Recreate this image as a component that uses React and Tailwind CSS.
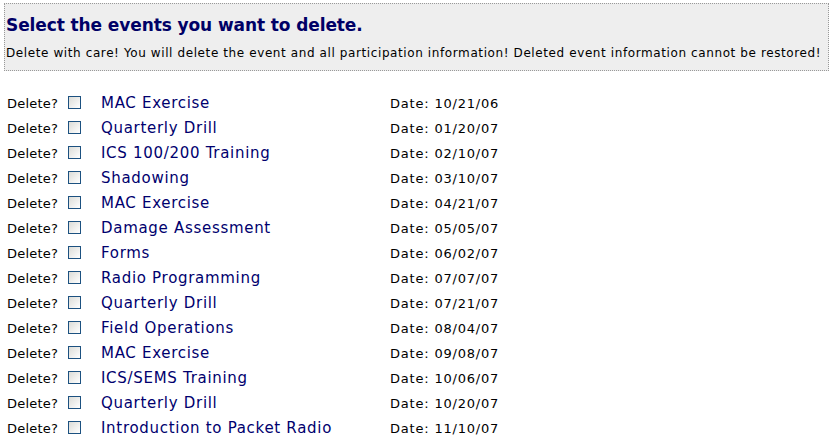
const events = [
  { name: "MAC Exercise", date: "10/21/06" },
  { name: "Quarterly Drill", date: "01/20/07" },
  { name: "ICS 100/200 Training", date: "02/10/07" },
  { name: "Shadowing", date: "03/10/07" },
  { name: "MAC Exercise", date: "04/21/07" },
  { name: "Damage Assessment", date: "05/05/07" },
  { name: "Forms", date: "06/02/07" },
  { name: "Radio Programming", date: "07/07/07" },
  { name: "Quarterly Drill", date: "07/21/07" },
  { name: "Field Operations", date: "08/04/07" },
  { name: "MAC Exercise", date: "09/08/07" },
  { name: "ICS/SEMS Training", date: "10/06/07" },
  { name: "Quarterly Drill", date: "10/20/07" },
  { name: "Introduction to Packet Radio", date: "11/10/07" },
  { name: "Quarterly Drill", date: "12/01/07" },
];

export default function App() {
  return (
    <div className="h-[446px] overflow-hidden bg-white font-['DejaVu_Sans',Verdana,sans-serif] text-black">
      <div className="mx-[4px] mt-[3px] border border-dotted border-[#999] bg-[#eeeeee] px-[1px] pt-[10px] pb-[9px]">
        <h2 className="text-[17px] font-bold leading-[22px] tracking-[-0.1px] text-[#000066]">Select the events you want to delete.</h2>
        <p className="mt-[9px] text-[12px] leading-[16px] tracking-[0.6px]">
          Delete with care! You will delete the event and all participation information! Deleted event information cannot be restored!
        </p>
      </div>

      <div className="mt-[20px] flex flex-col">
        {events.map((ev, i) => (
          <div key={i} className="flex h-[25px] items-center">
            <span className="ml-[7px] w-[61px] text-[13px] tracking-[0.2px]">Delete?</span>
            <span className="mb-[3px] h-[13px] w-[13px] border border-[#1c5180] bg-gradient-to-br from-[#dcdcd7] to-white"></span>
            <span className="ml-[20px] w-[289px] text-[15px] tracking-[0.7px] text-[#00006e]">{ev.name}</span>
            <span className="text-[13px] tracking-[0.8px]">Date: {ev.date}</span>
          </div>
        ))}
      </div>
    </div>
  );
}
